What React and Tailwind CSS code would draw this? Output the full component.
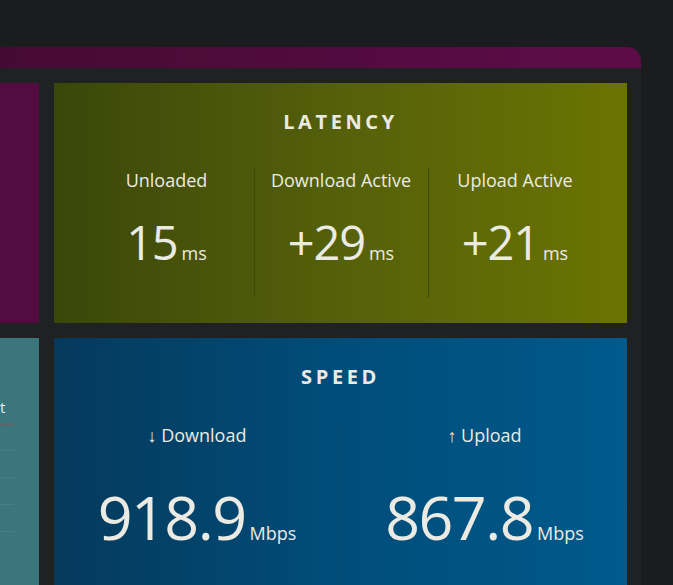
import React from 'react';

const latency = [
  { label: 'Unloaded', value: '15' },
  { label: 'Download Active', value: '+29' },
  { label: 'Upload Active', value: '+21' },
];

const speed = [
  { label: '↓ Download', value: '918.9' },
  { label: '↑ Upload', value: '867.8' },
];

export default function App() {
  return (
    <div
      className="w-[673px] h-[585px] overflow-hidden bg-[#1a1c1e] text-[#ebebe3]"
      style={{ fontFamily: '"Open Sans", "Noto Sans", sans-serif' }}
    >
      <div className="pt-[47px] w-[641px]">
        {/* header band */}
        <div className="h-[21px] rounded-tr-[14px] bg-gradient-to-r from-[#450a33] to-[#5e0c49]" />
        <div className="bg-[#1f2123] pt-[15px] grid grid-cols-[39px_573px] gap-x-[15px] gap-y-[15px]">
          {/* left purple panel (cut off) */}
          <div className="h-[240px] bg-[#530c42]" />

          {/* latency */}
          <div className="h-[240px] bg-gradient-to-r from-[#3b4709] via-[#55600a] to-[#6b7401] flex flex-col items-center">
            <div className="mt-[29px] text-[20px] font-bold tracking-[0.18em] leading-none">LATENCY</div>
            <div className="mt-[36px] flex">
              {latency.map((l, i) => (
                <div
                  key={l.label}
                  className={
                    'w-[174px] h-[130px] flex flex-col items-center ' +
                    (i > 0 ? 'border-l border-[#3e4a06]' : '')
                  }
                >
                  <div className="mt-[3px] text-[18px] leading-none">{l.label}</div>
                  <div className="mt-[30px] flex items-baseline">
                    <span className="text-[47px] leading-none font-normal tracking-tight">{l.value}</span>
                    <span className="ml-[4px] text-[18px] leading-none">ms</span>
                  </div>
                </div>
              ))}
            </div>
          </div>

          {/* left teal panel (cut off) */}
          <div className="h-[260px] bg-[#3b767c] pt-[62px]">
            <div className="text-[15px] leading-none">t</div>
            <div className="mt-[8px] h-[3px] w-[14px] bg-[#55686c]" />
            <div className="mt-[24px] h-px w-[14px] bg-[#467f85]" />
            <div className="mt-[26px] h-px w-[14px] bg-[#467f85]" />
            <div className="mt-[26px] h-px w-[14px] bg-[#467f85]" />
            <div className="mt-[26px] h-px w-[14px] bg-[#467f85]" />
          </div>

          {/* speed */}
          <div className="h-[260px] bg-gradient-to-r from-[#053a5c] via-[#004d7a] to-[#005a8c] flex flex-col items-center">
            <div className="mt-[29px] text-[20px] font-bold tracking-[0.18em] leading-none">SPEED</div>
            <div className="mt-[39px] flex">
              {speed.map((s, i) => (
                <div
                  key={s.label}
                  className={
                    'w-[287px] h-[170px] flex flex-col items-center ' +
                    (i > 0 ? 'border-l border-[#0a4a70]' : '')
                  }
                >
                  <div className="text-[18px] leading-none">{s.label}</div>
                  <div className="mt-[42px] flex items-baseline">
                    <span className="text-[61px] leading-none font-normal tracking-tight">{s.value}</span>
                    <span className="ml-[4px] text-[18px] leading-none">Mbps</span>
                  </div>
                </div>
              ))}
            </div>
          </div>
        </div>
      </div>
    </div>
  );
}
